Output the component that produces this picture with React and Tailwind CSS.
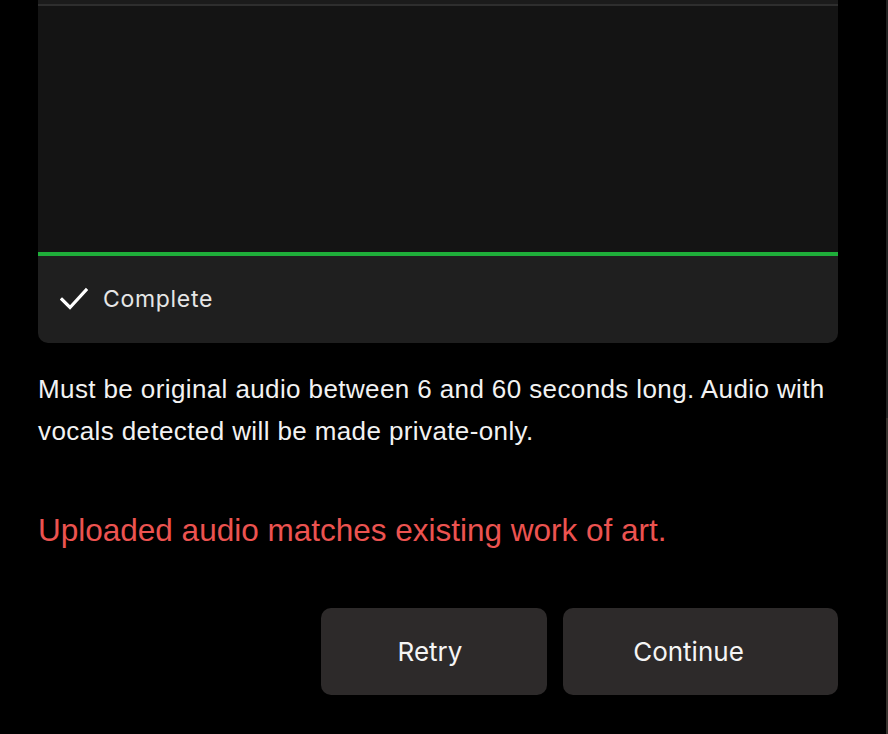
export default function App() {
  return (
    <div className="flex h-[734px] w-full overflow-hidden bg-black">
      <div className="flex flex-1 flex-col pl-[38px] pr-[48px]">
        <div className="overflow-hidden rounded-b-[10px]">
          <div className="h-[4px] bg-[#1b1b1b]" />
          <div className="h-[2px] bg-[#2e2e2e]" />
          <div className="h-[246px] bg-[#141414]" />
          <div className="h-[4px] bg-[#1fae3a]" />
          <div className="flex h-[87px] items-center gap-[15px] bg-[#1f1f1f] px-[22px]">
            <svg width="28" height="24" viewBox="0 0 28 24" fill="none" className="mt-[-2px]">
              <path d="M2 12.5L10 20.5L26 3" stroke="#fff" strokeWidth="3.2" strokeLinecap="square" />
            </svg>
            <span className="font-['Inter',sans-serif] text-[23px] tracking-[0.03em] text-[#e6e6e6]">
              Complete
            </span>
          </div>
        </div>

        <p className="mt-[25px] font-['Liberation_Sans',sans-serif] text-[26px] leading-[42px] tracking-[0.015em] text-[#f2f2f2]">
          Must be original audio between 6 and 60 seconds long. Audio with vocals detected will be made private-only.
        </p>

        <p className="mt-[58px] font-['Liberation_Sans',sans-serif] text-[31.5px] leading-[40px] text-[#ec5350]">
          Uploaded audio matches existing work of art.
        </p>

        <div className="mt-[58px] flex justify-end gap-[16px]">
          <button className="h-[87px] w-[226px] rounded-[10px] bg-[#2d2a2a] pr-[8px] font-['Inter',sans-serif] text-[26px] text-[#f5f5f5]">
            Retry
          </button>
          <button className="h-[87px] w-[275px] rounded-[10px] bg-[#2d2a2a] pr-[24px] font-['Inter',sans-serif] text-[26px] text-[#f5f5f5]">
            Continue
          </button>
        </div>
      </div>
      <div className="flex w-[2px] flex-col">
        <div className="h-[418px] bg-[#222222]" />
        <div className="flex-1 bg-[#38332f]" />
      </div>
    </div>
  );
}
